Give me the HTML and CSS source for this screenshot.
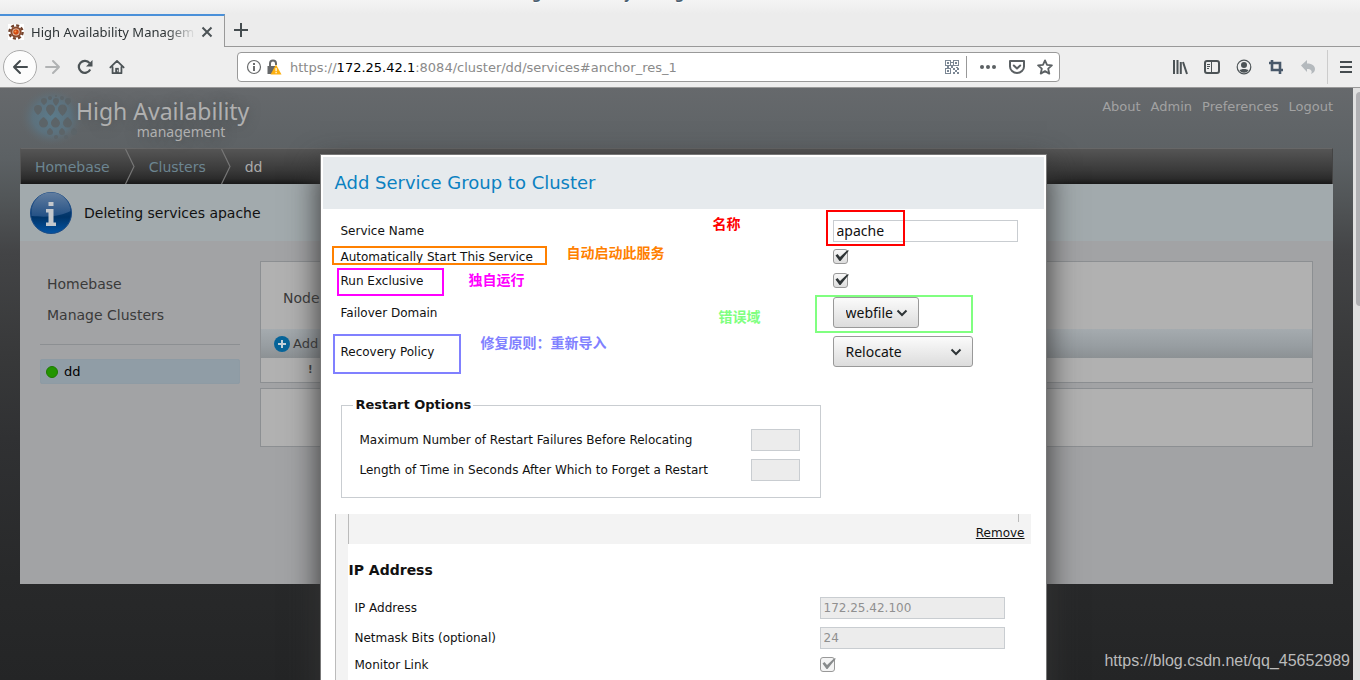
FILE: index.html
```html
<!DOCTYPE html>
<html lang="en">
<head>
<meta charset="utf-8">
<title>High Availability Management</title>
<link rel="stylesheet" href="styles.css">
</head>
<body>
<div class="titlebar">High Availability Management - Mozilla Firefox</div>
<div class="tabstrip">
  <div class="tab">
    <svg class="favicon" width="16" height="16" viewBox="0 0 16 16"><rect width="16" height="16" fill="#fff"/><circle cx="8" cy="8" r="6.6" fill="none" stroke="#70422c" stroke-width="2.4" stroke-dasharray="3 2.18"/><circle cx="8" cy="8" r="4.6" fill="#e9d8c8" stroke="#8d4a2c" stroke-width="2"/><circle cx="8" cy="8" r="2.8" fill="#d04a12"/><circle cx="7.4" cy="7.4" r="1" fill="#f79a4c"/></svg>
    <span class="tab-title">High Availability Management</span>
    <button class="plain" aria-label="Close tab"><svg width="12" height="12" viewBox="0 0 12 12"><path d="M1.5 1.5l9 9M10.5 1.5l-9 9" stroke="#4c5356" stroke-width="2"/></svg></button>
  </div>
  <button class="plain newtab" aria-label="New tab"><svg width="14" height="14" viewBox="0 0 14 14"><path d="M7 0v14M0 7h14" stroke="#454c4f" stroke-width="2"/></svg></button>
</div>
<div class="toolbar">
  <div class="nav-buttons">
    <button class="plain back" aria-label="Back"><svg width="16" height="16" viewBox="0 0 16 16"><path d="M15 8H2M8 2L2 8l6 6" fill="none" stroke="#454c4f" stroke-width="2" stroke-linecap="round" stroke-linejoin="round"/></svg></button>
    <button class="plain" aria-label="Forward"><svg width="16" height="16" viewBox="0 0 16 16"><path d="M1 8h13M8 2l6 6-6 6" fill="none" stroke="#b0b2b3" stroke-width="2" stroke-linecap="round" stroke-linejoin="round"/></svg></button>
    <button class="plain" aria-label="Reload"><svg width="16" height="16" viewBox="0 0 16 16"><path d="M13.2 10.5A6 6 0 1 1 12.6 4.2" fill="none" stroke="#4c5356" stroke-width="2.2"/><path d="M15.5 1v6.5H9z" fill="#4c5356"/></svg></button>
    <button class="plain" aria-label="Home"><svg width="16" height="16" viewBox="0 0 18 16"><path d="M1.5 8.5L9 1.2l7.500 7.300M4 8v7h10V8" fill="none" stroke="#4c5356" stroke-width="2" stroke-linejoin="round" stroke-linecap="round"/><path d="M7 15V9h4v6z" fill="#4c5356"/><path d="M9.200 11h1v2h-1z" fill="#eee"/></svg></button>
  </div>
  <div class="urlbar">
    <svg width="16" height="16" viewBox="0 0 16 16"><circle cx="8" cy="8" r="6.500" fill="none" stroke="#6a6c6d" stroke-width="1.200"/><path d="M7 4h2v2H7zM7 7h2v5H7z" fill="#6a6c6d"/></svg>
    <svg width="16" height="16" viewBox="0 0 16 16"><path d="M4 8V4.500a3 3 0 0 1 6 0V6" fill="none" stroke="#66686a" stroke-width="2"/><path d="M1.500 7H10v8H1.500z" fill="#66686a"/><path d="M10 5.500l5.500 10h-11z" fill="#fdb010"/><path d="M9.500 9h1.200v3.300H9.500zM9.500 13h1.200v1.200H9.500z" fill="#fff"/></svg>
    <div class="url" role="textbox" aria-label="Address" contenteditable="true" spellcheck="false">https://<b>172.25.42.1</b>:8084/cluster/dd/services#anchor_res_1</div>
    <svg width="14" height="14" viewBox="0 0 14 14" fill="#7b8794"><path d="M0 0h6v6H0zM1 1v4h4V1zM8 0h6v6H8zM9 1v4h4V1zM0 8h6v6H0zM1 9v4h4V9z" fill-rule="evenodd"/><path d="M2 2h2v2H2zM10 2h2v2h-2zM2 10h2v2H2zM6 2h2v1H6zM6 5h2v3H6zM8 8h2v2H8zM10 10h2v2h-2zM12 8h2v2h-2zM8 12h2v2H8zM12 12h2v2h-2zM2 6h2v2H2zM11 7h2v1h-2z"/></svg>
    <span class="url-sep"></span>
    <svg width="18" height="16" viewBox="0 0 18 16" fill="#5b6063"><circle cx="3" cy="8" r="2"/><circle cx="9" cy="8" r="2"/><circle cx="15" cy="8" r="2"/></svg>
    <svg width="16" height="16" viewBox="0 0 16 16" fill="none" stroke="#5b6063" stroke-width="2" stroke-linecap="round" stroke-linejoin="round"><path d="M1 2h14v5.500a7 6.500 0 0 1-14 0z"/><path d="M4.800 6.500L8 9.500l3.200-3"/></svg>
    <svg width="16" height="16" viewBox="0 0 16 16"><path d="M8 1.400l2 4.500 4.900.5-3.700 3.300 1.100 4.900L8 12.100l-4.300 2.500 1.100-4.900L1.100 6.400 6 5.900z" fill="none" stroke="#5b6063" stroke-width="1.800" stroke-linejoin="round"/></svg>
  </div>
  <div class="actions">
    <button class="plain" aria-label="Library"><svg width="16" height="16" viewBox="0 0 16 16" fill="none" stroke="#4c5356" stroke-width="2"><path d="M2 1v14M5.500 1v14M8.800 3v12M11 3l4 12"/></svg></button>
    <button class="plain" aria-label="Sidebars"><svg width="16" height="16" viewBox="0 0 16 16" fill="none" stroke="#4c5356"><rect x="1" y="2" width="14" height="12" rx="2" stroke-width="2"/><path d="M7.500 3v10M3 5.500h3M3 7.500h3M3 9.500h2"/></svg></button>
    <button class="plain" aria-label="Account"><svg width="16" height="16" viewBox="0 0 16 16"><circle cx="8" cy="8" r="6.800" fill="none" stroke="#4c5356" stroke-width="1.200"/><circle cx="8" cy="6" r="3" fill="#4c5356"/><path d="M3.500 11.500c1-2 8-2 9 0A5.500 5.500 0 0 1 3.500 11.500z" fill="#4c5356"/></svg></button>
    <button class="plain" aria-label="Screenshot"><svg width="16" height="16" viewBox="0 0 16 16"><path d="M1 4h11v11M4 1v10h11" fill="none" stroke="#48586a" stroke-width="2.600"/></svg></button>
    <button class="plain" aria-label="Undo"><svg width="16" height="16" viewBox="0 0 16 16"><path d="M1 6.500L7 1v3.500c5.500 0 8 2.500 8 5.500 0 2-1.300 4-4 5 1.800-3 0-5-4-5v3z" fill="#b4b9bd"/></svg></button>
    <span class="bar-sep"></span>
    <button class="plain" aria-label="Menu"><svg width="12" height="12" viewBox="0 0 12 12"><path d="M0 1h12M0 6h12M0 11h12" stroke="#454c4f" stroke-width="2"/></svg></button>
  </div>
</div>
<div class="viewport">
  <div class="page">
    <header class="masthead">
      <a class="logo" href="#">
        <svg class="logo-mark" width="64" height="60" viewBox="0 0 64 60">
          <defs><radialGradient id="glow"><stop offset="0" stop-color="#5b7b8b"/><stop offset=".6" stop-color="#5b7482" stop-opacity=".8"/><stop offset="1" stop-color="#62696d" stop-opacity="0"/></radialGradient></defs>
          <ellipse cx="32" cy="29" rx="32" ry="29" fill="url(#glow)"/>
          <g fill="#5c6468" transform="translate(4 -2)">
            <circle cx="26" cy="12" r="2"/><circle cx="32" cy="10" r="1"/><circle cx="38" cy="12" r="2"/>
            <path d="M17 15a3 3 0 0 1 6 0c0 2-3 4-3 4s-3-2-3-4zM29 15a3 3 0 0 1 6 0c0 2-3 5-3 5s-3-3-3-5zM41 15a3 3 0 0 1 6 0c0 2-3 4-3 4s-3-2-3-4z"/>
            <path d="M10 23a4 4 0 0 1 8 0c0 3-4 6-4 6s-4-3-4-6zM22 23a4.500 4.500 0 0 1 9 0c0 3-4.500 7-4.500 7s-4.500-4-4.500-7zM34 23a4.500 4.500 0 0 1 9 0c0 3-4.500 7-4.500 7s-4.500-4-4.500-7z"/>
            <path d="M15 37a4.500 4.500 0 0 0 9 0c0-3-4.500-6-4.500-6S15 34 15 37zM27 37a4.500 4.500 0 0 0 9 0c0-3-4.500-6-4.500-6S27 34 27 37zM39 37a4.500 4.500 0 0 0 9 0c0-3-4.500-6-4.500-6S39 34 39 37z"/>
            <path d="M23 46a3 3 0 0 0 6 0c0-2-3-4-3-4s-3 2-3 4zM35 46a3 3 0 0 0 6 0c0-2-3-4-3-4s-3 2-3 4zM47 46a3 3 0 0 0 6 0c0-2-3-4-3-4s-3 2-3 4z"/>
            <circle cx="32" cy="51" r="2"/><circle cx="42" cy="51" r="2"/>
          </g>
        </svg>
        <span class="logo-text"><span class="logo-name">High Availability</span><span class="logo-sub">management</span></span>
      </a>
      <nav class="user-links"><a href="#">About</a><a href="#">Admin</a><a href="#">Preferences</a><a href="#">Logout</a></nav>
    </header>
    <nav class="crumbs">
      <a href="#">Homebase</a>
      <svg width="10" height="35" viewBox="0 0 10 35"><path d="M.5 0l8.500 17.500L.5 35" fill="none" stroke="#777" stroke-width="1.200"/></svg>
      <a href="#">Clusters</a>
      <svg width="10" height="35" viewBox="0 0 10 35"><path d="M.5 0l8.500 17.500L.5 35" fill="none" stroke="#777" stroke-width="1.200"/></svg>
      <span>dd</span>
    </nav>
    <div class="notice">
      <svg width="42" height="42" viewBox="0 0 42 42"><defs><linearGradient id="ib" x1="0" y1="0" x2="0" y2="1"><stop offset="0" stop-color="#23508a"/><stop offset=".6" stop-color="#003468"/><stop offset="1" stop-color="#0354a4"/></linearGradient><linearGradient id="ig" x1="0" y1="0" x2="0" y2="1"><stop offset="0" stop-color="#7289a5"/><stop offset="1" stop-color="#2b578c"/></linearGradient></defs><circle cx="21" cy="21" r="20.500" fill="url(#ib)" stroke="#1b4b85"/><path d="M1.500 21a19.500 19.500 0 0 1 39-2C32 23 22 26 1.500 24z" fill="url(#ig)" opacity=".8"/><path d="M18.500 10h5v4h-5zM16 17h7.500v13.500H26V34H16v-3.500h2.500v-10H16z" fill="#c4c8cc"/></svg>
      <span>Deleting services apache</span>
    </div>
    <div class="columns">
      <aside class="side">
        <a href="#">Homebase</a>
        <a href="#">Manage Clusters</a>
        <hr>
        <a class="current" href="#"><span class="dot"></span>dd</a>
      </aside>
      <main class="main">
        <section class="panel">
          <div class="panel-tabs">Nodes</div>
          <div class="panel-bar"><svg width="16" height="16" viewBox="0 0 16 16"><circle cx="8" cy="8" r="8" fill="#07659a"/><path d="M8 4v8M4 8h8" stroke="#c3d2da" stroke-width="2"/></svg>Add</div>
          <div class="panel-row">!</div>
        </section>
        <section class="panel empty"></section>
      </main>
    </div>
  </div>
  <div class="scrollbar"><div class="thumb"></div></div>

  <div class="overlay">
    <form class="dialog">
      <h2 class="dialog-title">Add Service Group to Cluster</h2>
      <div class="fields">
        <label for="name">Service Name</label><input class="text" id="name" type="text" value="apache">
        <label for="auto">Automatically Start This Service</label><span class="check"><input id="auto" type="checkbox" checked><svg width="16" height="16" viewBox="0 0 16 16"><path d="M2.500 6.500L4.500 5l2.500 3L14 1.500h2L7.500 12h-1z" fill="#2e3436"/></svg></span>
        <label for="excl">Run Exclusive</label><span class="check"><input id="excl" type="checkbox" checked><svg width="16" height="16" viewBox="0 0 16 16"><path d="M2.500 6.500L4.500 5l2.500 3L14 1.500h2L7.500 12h-1z" fill="#2e3436"/></svg></span>
        <label for="domain">Failover Domain</label><span class="pick short"><select id="domain"><option>webfile</option></select><svg width="12" height="8" viewBox="0 0 12 8"><path d="M1.500 1.500L6 6l4.500-4.500" fill="none" stroke="#2e3436" stroke-width="2"/></svg></span>
        <label for="policy">Recovery Policy</label><span class="pick"><select id="policy"><option>Relocate</option></select><svg width="12" height="8" viewBox="0 0 12 8"><path d="M1.500 1.500L6 6l4.500-4.500" fill="none" stroke="#2e3436" stroke-width="2"/></svg></span>
      </div>
      <fieldset class="restart">
        <legend>Restart Options</legend>
        <div class="restart-row"><label for="max">Maximum Number of Restart Failures Before Relocating</label><input class="text" id="max" type="text" disabled></div>
        <div class="restart-row"><label for="len">Length of Time in Seconds After Which to Forget a Restart</label><input class="text" id="len" type="text" disabled></div>
      </fieldset>
      <section class="resource">
        <div class="resource-bar"><a href="#">Remove</a><span class="tick"></span></div>
        <div class="resource-body">
          <h3>IP Address</h3>
          <div class="fields">
            <label for="ip">IP Address</label><input class="text" id="ip" type="text" value="172.25.42.100" disabled>
            <label for="mask">Netmask Bits (optional)</label><input class="text" id="mask" type="text" value="24" disabled>
            <label for="link">Monitor Link</label><span class="check"><input id="link" type="checkbox" checked disabled><svg width="16" height="16" viewBox="0 0 16 16"><path d="M2.500 6.500L4.500 5l2.500 3L14 1.500h2L7.500 12h-1z" fill="#888b8c"/></svg></span>
          </div>
        </div>
      </section>
      <div class="box box-name"></div><span class="note note-name">名称</span>
      <div class="box box-auto"></div><span class="note note-auto">自动启动此服务</span>
      <div class="box box-excl"></div><span class="note note-excl">独自运行</span>
      <div class="box box-domain"></div><span class="note note-domain">错误域</span>
      <div class="box box-policy"></div><span class="note note-policy">修复原则：重新导入</span>
    </form>
  </div>
  <span class="watermark">https://blog.csdn.net/qq_45652989</span>
</div>
</body>
</html>
```
FILE: styles.css
```css
* { box-sizing: border-box; }
body {
  margin: 0;
  height: 100vh;
  display: flex;
  flex-direction: column;
  overflow: hidden;
  background: #ededed;
  font: 12px/16px "DejaVu Sans", sans-serif;
  color: #111;
}
a { color: inherit; text-decoration: none; }
svg { display: block; flex: none; }
.plain { display: flex; padding: 0; border: 0; background: none; }

/* Browser frame */
.titlebar {
  height: 14px;
  flex: none;
  display: flex;
  align-items: flex-end;
  justify-content: center;
  padding-bottom: 11px;
  overflow: hidden;
  background: linear-gradient(#f4f4f4, #ececec);
  color: #4c5f70;
  font: bold 14px/18px "Noto Sans", sans-serif;
  text-shadow: 0 1px #fff;
}
.tabstrip {
  height: 33px;
  flex: none;
  display: flex;
  background: #ececec;
}
.tab {
  width: 225px;
  display: flex;
  align-items: center;
  gap: 7px;
  padding: 0 11px 0 8px;
  border-top: 2px solid #4a90d9;
  border-right: 1px solid #999;
  background: #eee;
}
.tab-title {
  flex: 1;
  overflow: hidden;
  white-space: nowrap;
  color: #2e3436;
  font: 13px/20px "Noto Sans", sans-serif;
  -webkit-mask-image: linear-gradient(90deg, #000 135px, transparent 165px);
  mask-image: linear-gradient(90deg, #000 135px, transparent 165px);
}
.newtab { flex: 1; align-items: center; padding-left: 9px; border-bottom: 1px solid #999; }
.toolbar {
  height: 41px;
  flex: none;
  display: flex;
  align-items: center;
  border-bottom: 1px solid #999;
  background: #eee;
}
.nav-buttons { width: 237px; display: flex; align-items: center; gap: 16px; padding-left: 3px; }
.back {
  width: 34px;
  height: 34px;
  align-items: center;
  justify-content: center;
  margin-right: -8px;
  border: 1px solid #aaa;
  border-radius: 50%;
  background: #fcfcfc;
}
.urlbar {
  flex: 1;
  height: 30px;
  display: flex;
  align-items: center;
  gap: 12px;
  padding: 0 6px 0 8px;
  border: 1px solid #999;
  border-radius: 4px;
  background: #fff;
}
.urlbar svg:nth-child(2) { margin: 0 -4px 0 -8px; }
.url {
  flex: 1;
  padding-top: 2px;
  overflow: hidden;
  white-space: nowrap;
  color: #8a8a8a;
  font: 13px/20px "DejaVu Sans", sans-serif;
}
.url b { color: #000; font-weight: normal; }
.url-sep { width: 1px; height: 22px; margin-left: -5px; background: #999; }
.actions { display: flex; align-items: center; gap: 16px; padding: 0 8px 0 112px; }
.bar-sep { width: 1px; height: 34px; margin-left: -5px; margin-right: -4px; background: #ccc; }

/* Web page */
.viewport { flex: 1; display: flex; position: relative; overflow: hidden; min-height: 0; }
.page {
  flex: 1;
  padding: 0 20px;
  background: linear-gradient(#66696c 0, #5c6164 70px, #525658 110px, #434446 165px, #38393a 265px, #303133 350px, #28292a 490px, #242526 593px);
}
.scrollbar { width: 7px; flex: none; padding: 4px 0 0 3px; background: #e0e0e0; }
.thumb { height: 214px; border-radius: 4px 0 0 4px; background: #b0b0b3; }
.masthead { height: 60px; display: flex; justify-content: space-between; }
.logo { display: flex; color: #b0b0b0; }
.logo-mark { margin-right: -8px; }
.logo-text {
  display: flex;
  flex-direction: column;
  padding-top: 9px;
  font: 23px/28px "Noto Sans", sans-serif;
  text-shadow: 0 0 12px #4b4f51;
}
.logo-sub { padding-right: 24px; text-align: right; font: 14px/14px "Noto Sans", sans-serif; }
.user-links { display: flex; gap: 10px; padding-top: 11px; color: #a2a2a2; font-size: 13px; }
.crumbs {
  height: 36px;
  display: flex;
  align-items: center;
  padding-left: 14px;
  border-top: 1px solid #676767;
  border-left: 1px solid #555;
  border-right: 1px solid #444;
  background: linear-gradient(#555, #3a3a3a 60%, #2b2b2b 85%, #181818);
  color: #aaa;
  font-size: 14px;
}
.crumbs a { color: #6c8591; }
.crumbs svg { margin: 0 14px 0 15px; }
.notice {
  height: 57px;
  display: flex;
  align-items: center;
  gap: 12px;
  padding-left: 10px;
  background: #a2aaad;
  color: #111;
  font-size: 14px;
}
.columns {
  min-height: 343px;
  display: flex;
  gap: 20px;
  padding: 20px;
  background: #a2a3a5;
}
.side { width: 200px; flex: none; display: flex; flex-direction: column; color: #3a3a3a; font-size: 14px; padding-top: 8px; }
.side > a { padding: 7px; height: 31px; }
.side hr { width: 100%; height: 1px; margin: 13px 0 14px; border: 0; background: #8c8f92; }
.side .current {
  display: flex;
  align-items: center;
  gap: 6px;
  height: 25px;
  padding: 0 5px;
  border: 1px solid #8e9ba4;
  border-radius: 2px;
  background: #909da6;
  color: #000;
  font-size: 13px;
}
.dot { width: 12px; height: 12px; border: 1px solid #1d7a00; border-radius: 50%; background: #229500; }
.main { flex: 1; display: flex; flex-direction: column; gap: 5px; }
.panel { border: 1px solid #8c8f92; background: #b1b1b1; color: #3a3a3a; }
.panel-tabs { height: 67px; padding: 28px 22px 0; font-size: 14px; }
.panel-bar {
  height: 29px;
  display: flex;
  align-items: center;
  gap: 3px;
  padding-left: 13px;
  background: linear-gradient(#a5abaf, #979da1 60%, #8c9194);
  font-size: 13px;
}
.panel-row { height: 24px; padding: 4px 47px; font-size: 10px; font-weight: bold; }
.empty { height: 59px; }

/* Dialog */
.overlay {
  position: absolute;
  inset: 0;
  display: flex;
  justify-content: center;
  align-items: flex-start;
  padding: 66px 0 0 6px;
}
.dialog {
  position: relative;
  width: 727px;
  flex: none;
  min-height: 620px;
  padding: 2px;
  border: 1px solid #777;
  background: #fff;
  box-shadow: 0 12px 30px #333;
}
.dialog-title {
  margin: 0 0 7px;
  height: 52px;
  padding: 14px 12px;
  background: #e6eaed;
  color: #0b81c1;
  font-size: 18px;
  line-height: 24px;
  font-weight: normal;
}
.fields {
  display: grid;
  grid-template-columns: 492px 1fr;
  grid-template-rows: 29px 24px 24px 39px 39px;
  align-items: center;
  padding-left: 18px;
}
.text {
  width: 185px;
  height: 22px;
  padding: 0 3px;
  border: 1px solid #c9cdd1;
  border-radius: 0;
  background: #fff;
  color: #111;
  font: 14px/18px "Noto Sans", sans-serif;
}
.text:disabled { background: #ececec; color: #909090; font: 12px/18px "DejaVu Sans", sans-serif; }
.check { width: 16px; height: 16px; display: grid; }
.check > * { grid-area: 1 / 1; }
.check input {
  appearance: none;
  width: 15px;
  height: 15px;
  margin: 0;
  border: 1px solid #999;
  border-radius: 3px;
  background: linear-gradient(#f8f8f8, #ddd);
}
.check input:disabled { background: #f4f4f4; }
.check svg { position: relative; pointer-events: none; }
.pick { width: 140px; display: grid; align-items: center; }
.pick.short { width: 86px; }
.pick > * { grid-area: 1 / 1; }
.pick select {
  appearance: none;
  width: 100%;
  height: 31px;
  padding: 0 12px;
  border: 1px solid #999;
  border-radius: 3px;
  background: linear-gradient(#fbfbfb, #dcdcdc);
  color: #111;
  font: 14px/20px "Noto Sans", sans-serif;
}
.pick svg { justify-self: end; margin-right: 11px; pointer-events: none; }
.restart {
  width: 480px;
  margin: 26px 0 16px 18px;
  padding: 12px 20px 12px 18px;
  border: 1px solid #c9cdd1;
}
.restart legend { margin-left: -7px; padding: 0 2px 0 3px; font-size: 13px; font-weight: bold; }
.restart-row { height: 30px; display: flex; align-items: center; justify-content: space-between; }
.restart-row .text { width: 49px; }
.resource {
  margin: 0 13px 0 12px;
  padding-left: 12px;
  border-left: 1px solid #bbb;
  background: #f3f3f3;
}
.resource-bar {
  position: relative;
  height: 30px;
  padding: 11px 6px 0;
  border-left: 1px solid #bbb;
  background: #f3f3f3;
  text-align: right;
}
.resource-bar a { text-decoration: underline; }
.tick { position: absolute; top: 0; right: 12px; width: 1px; height: 8px; background: #bbb; }
.resource-body { height: 180px; background: #fff; }
.resource h3 { margin: 0; padding: 18px 0 15px 1px; font-size: 14px; }
.resource .fields { grid-template-columns: 465px 1fr; grid-template-rows: 30px 30px 24px; padding-left: 7px; }

/* Annotations drawn over the dialog */
.box { position: absolute; border: 2px solid; pointer-events: none; }
.note { position: absolute; font: bold 14px/20px "Noto Sans CJK SC", sans-serif; white-space: nowrap; }
.box-name { left: 505px; top: 55px; width: 79px; height: 36px; }
.box-auto { left: 11px; top: 91px; width: 215px; height: 19px; }
.box-excl { left: 16px; top: 113px; width: 107px; height: 28px; }
.box-domain { left: 494px; top: 140px; width: 158px; height: 38px; }
.box-policy { left: 12px; top: 179px; width: 128px; height: 40px; }
.note-name { left: 392px; top: 58px; }
.note-auto { left: 246px; top: 87px; }
.note-excl { left: 148px; top: 114px; }
.note-domain { left: 398px; top: 151px; }
.note-policy { left: 160px; top: 177px; }
.box-name, .note-name { color: #f00; }
.box-auto, .note-auto { color: #ff8000; }
.box-excl, .note-excl { color: #f0f; }
.box-domain, .note-domain { color: #80ff80; }
.box-policy, .note-policy { color: #8080ff; }
.watermark {
  position: absolute;
  right: 10px;
  bottom: 9px;
  color: #bbb;
  font: 16px/20px "Liberation Sans", sans-serif;
}
```
